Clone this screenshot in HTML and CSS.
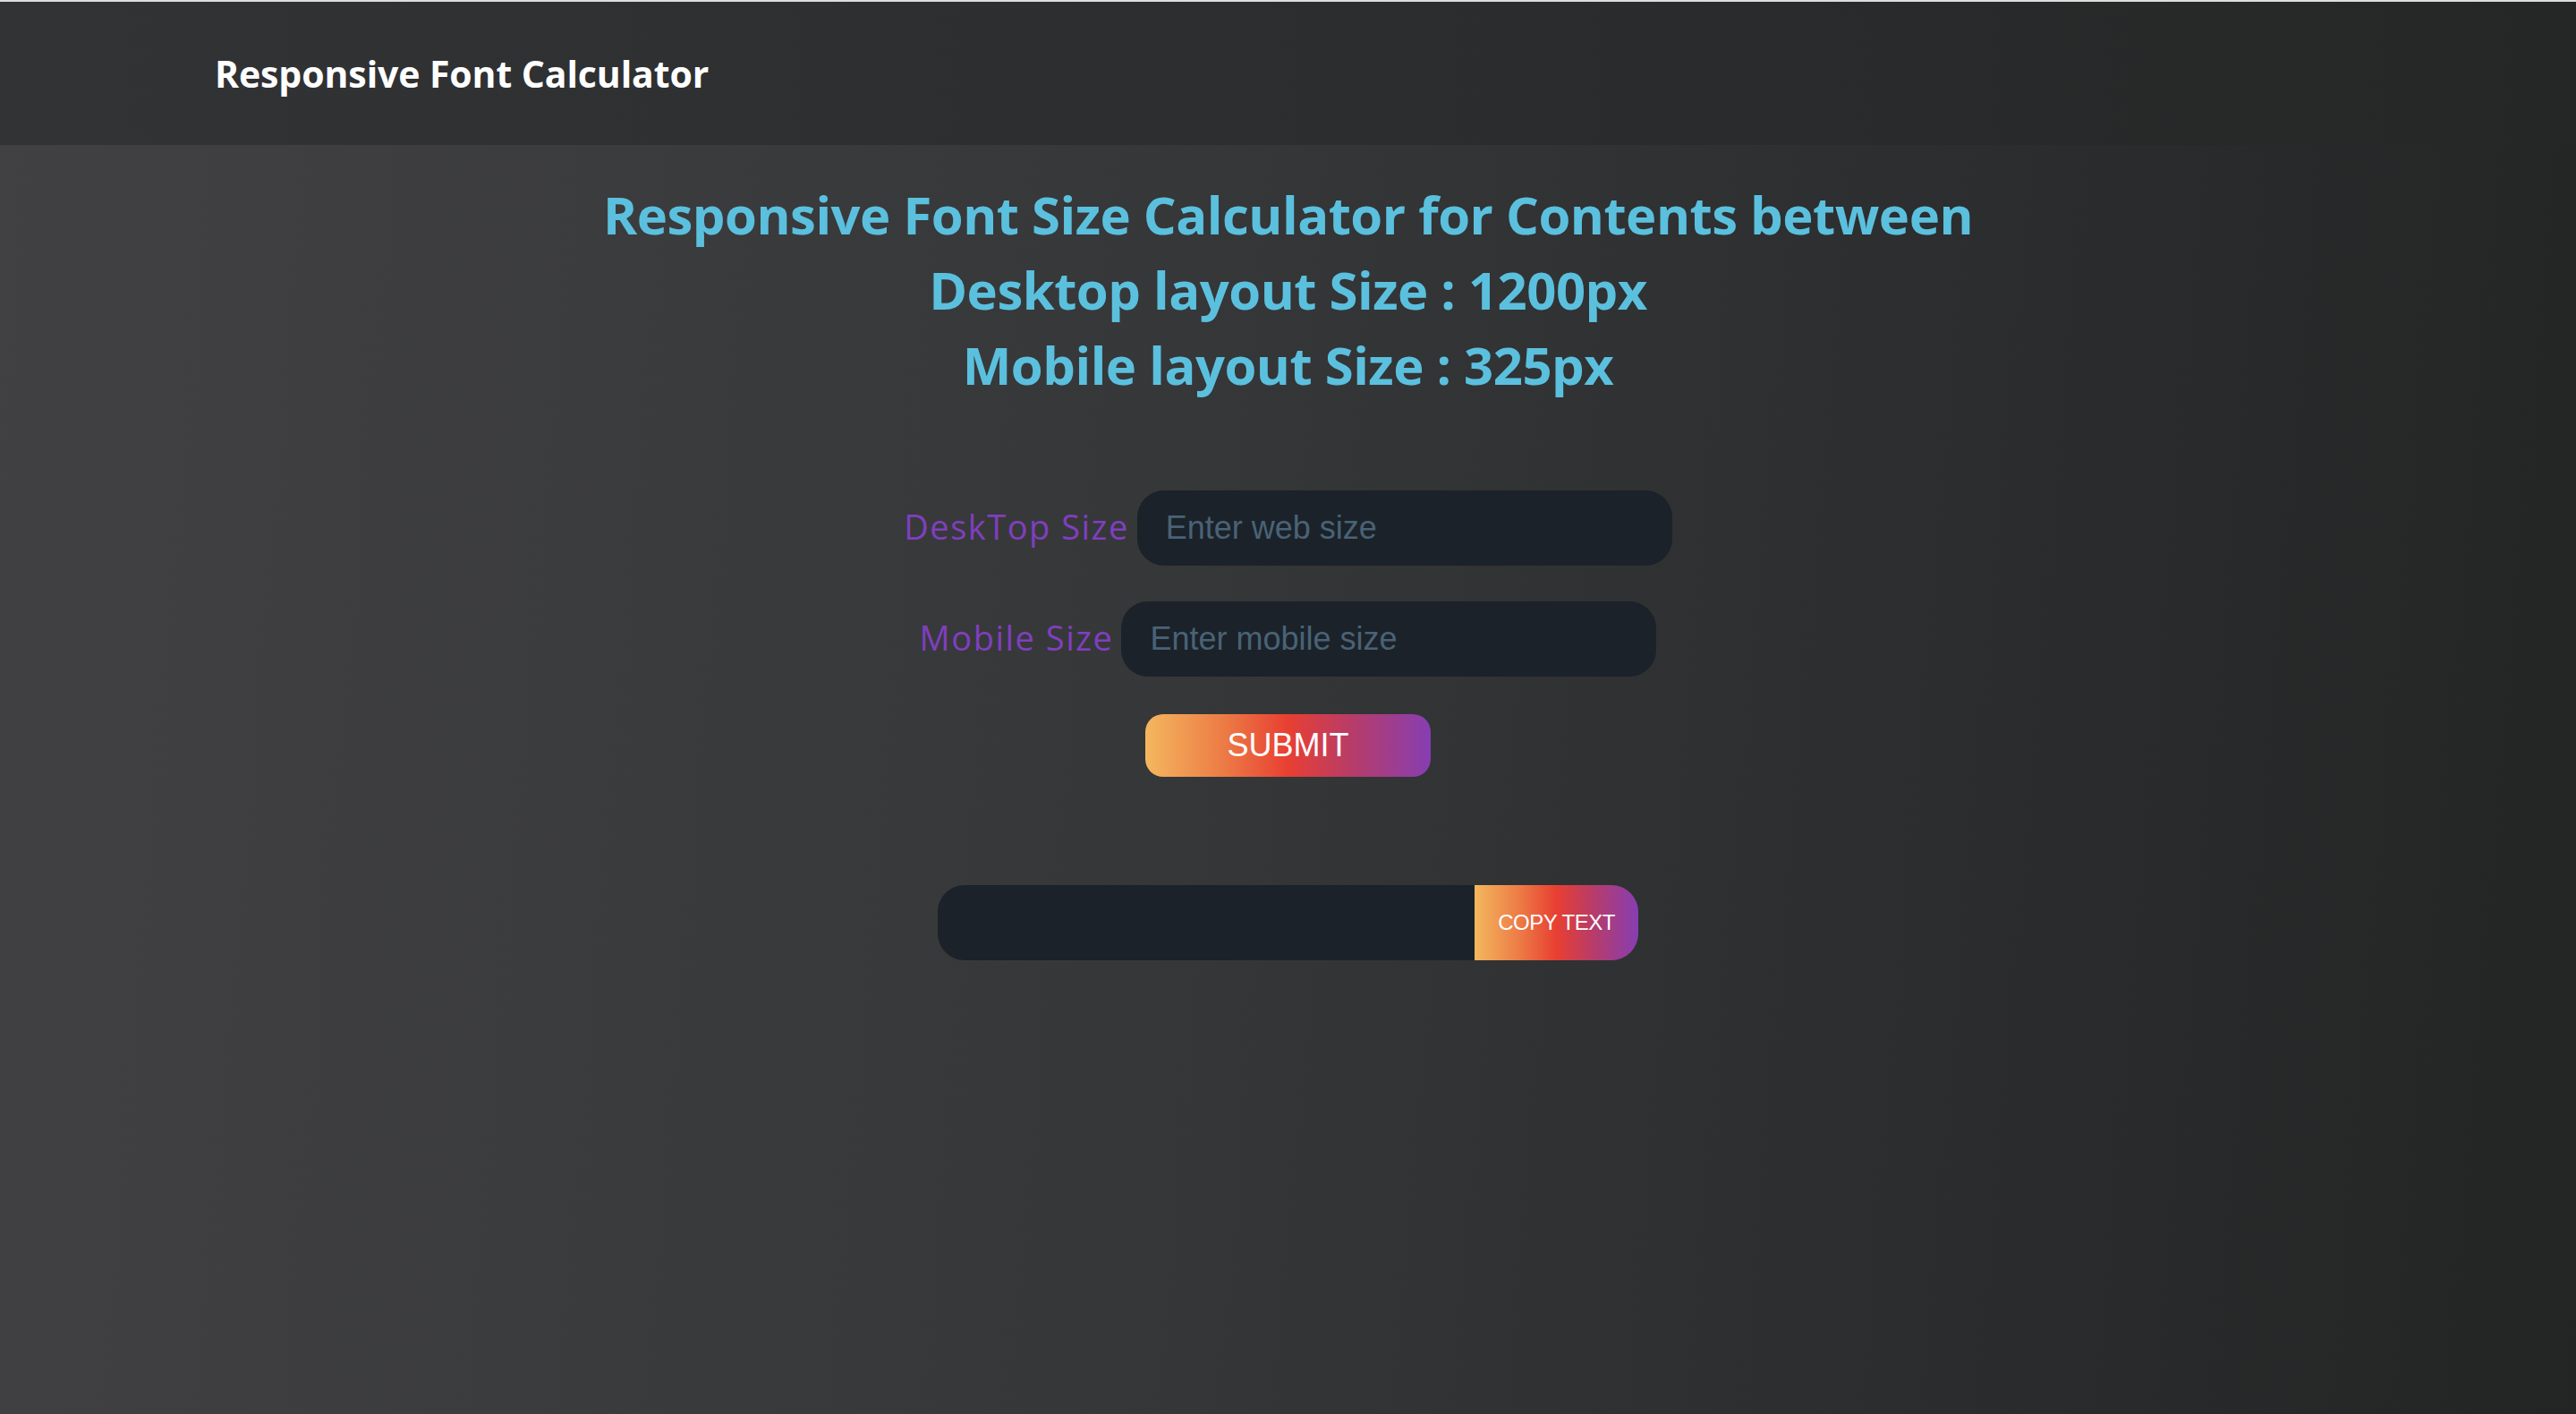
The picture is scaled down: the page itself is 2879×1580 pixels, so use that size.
FILE: index.html
```html
<!DOCTYPE html>
<html lang="en">
<head>
<meta charset="utf-8">
<title>Responsive Font Calculator</title>
<link rel="stylesheet" href="styles.css">
</head>
<body>
<header class="topbar">
  <div class="brand">Responsive Font Calculator</div>
</header>
<main class="main">
  <h1 class="title">Responsive Font Size Calculator for Contents between<br>Desktop layout Size : 1200px<br>Mobile layout Size : 325px</h1>
  <form class="calc">
    <div class="row">
      <label class="label" for="web">DeskTop Size</label>
      <input class="field" id="web" type="text" placeholder="Enter web size">
    </div>
    <div class="row">
      <label class="label" for="mob">Mobile Size</label>
      <input class="field" id="mob" type="text" placeholder="Enter mobile size">
    </div>
    <button class="submit" type="button">SUBMIT</button>
  </form>
  <div class="copy">
    <input class="copy-field" type="text" readonly>
    <button class="copy-btn" type="button">COPY TEXT</button>
  </div>
</main>
</body>
</html>
```
FILE: styles.css
```css
html, body {
  margin: 0;
  padding: 0;
}
body {
  min-height: 100vh;
  background: linear-gradient(95deg, #414144 0%, #363739 45%, #232424 100%);
  font-family: "Open Sans", "Liberation Sans", sans-serif;
  border-top: 2px solid #dedede;
  box-sizing: border-box;
}
.topbar {
  height: 160px;
  display: flex;
  align-items: center;
  padding-left: 240px;
  background: linear-gradient(90deg, #323335 0%, #2b2c2d 60%, #252626 100%);
}
.brand {
  color: #ffffff;
  font-family: "Open Sans", sans-serif;
  font-weight: 700;
  font-size: 41px;
  letter-spacing: -0.1px;
}
.main {
  display: flex;
  flex-direction: column;
  align-items: center;
}
.title {
  margin: 36px 0 0;
  text-align: center;
  color: #5bc0de;
  font-family: "Open Sans", sans-serif;
  font-weight: 700;
  font-size: 58px;
  line-height: 84px;
  letter-spacing: -0.5px;
}
.calc {
  margin-top: 98px;
  display: flex;
  flex-direction: column;
  align-items: center;
  gap: 40px;
}
.row {
  display: flex;
  align-items: center;
  gap: 9px;
}
.label {
  color: #7f3fbf;
  font-family: "Open Sans", sans-serif;
  font-size: 38px;
  font-weight: 400;
  letter-spacing: 1.5px;
  margin-bottom: 4px;
}
.field {
  width: 598px;
  height: 84px;
  box-sizing: border-box;
  border: none;
  border-radius: 30px;
  background: #1b2229;
  padding: 0 32px;
  font-family: "Liberation Sans", Arial, sans-serif;
  font-size: 36px;
  color: #cfd8e0;
  outline: none;
}
.field::placeholder {
  color: #4a6276;
}
.submit {
  margin-top: 2px;
  width: 319px;
  height: 70px;
  border: none;
  border-radius: 20px;
  background: linear-gradient(90deg, #f4b75e 0%, #ec7a45 28%, #e83f32 50%, #b83c68 72%, #863eb2 100%);
  color: #ffffff;
  font-family: "Liberation Sans", Arial, sans-serif;
  font-size: 36px;
  cursor: pointer;
}
.copy {
  margin-top: 121px;
  display: flex;
  height: 84px;
}
.copy-field {
  width: 600px;
  height: 84px;
  box-sizing: border-box;
  border: none;
  border-radius: 30px 0 0 30px;
  background: #1b2229;
  outline: none;
}
.copy-btn {
  width: 183px;
  height: 84px;
  border: none;
  border-radius: 0 30px 30px 0;
  background: linear-gradient(90deg, #f4b75e 0%, #ec7a45 28%, #e83f32 50%, #b83c68 72%, #863eb2 100%);
  color: #ffffff;
  font-family: "Liberation Sans", Arial, sans-serif;
  font-size: 24px;
  letter-spacing: -0.5px;
  cursor: pointer;
}
```
